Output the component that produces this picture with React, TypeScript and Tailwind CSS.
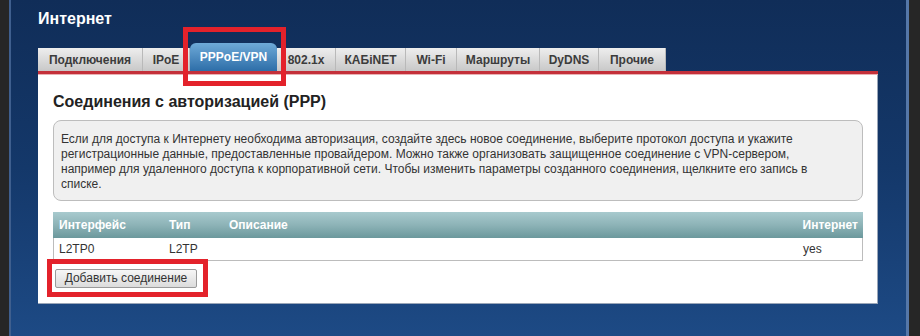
import React from "react";

const tabs = [
  { label: "Подключения", w: "w-[105px]" },
  { label: "IPoE", w: "w-[47px]" },
  { label: "PPPoE/VPN", w: "w-[87px]", active: true },
  { label: "802.1x", w: "w-[59px]" },
  { label: "КАБiNET", w: "w-[70px]" },
  { label: "Wi-Fi", w: "w-[51px]" },
  { label: "Маршруты", w: "w-[83px]" },
  { label: "DyDNS", w: "w-[59px]" },
  { label: "Прочие", w: "w-[67px]" },
];

export default function App() {
  return (
    <div className="relative flex w-[920px] h-[336px] overflow-hidden bg-[#2b2b2b] font-['Liberation_Sans',Arial,sans-serif]">
      {/* left dark strip */}
      <div className="w-[9px] shrink-0 bg-[#262626]" />

      {/* blue panel */}
      <div className="w-[900px] shrink-0 border-l-2 border-r-[3px] border-l-[#3f5f8e] border-r-[#5577a8] bg-gradient-to-b from-[#102d58] via-[#14386a] to-[#1d4a85] px-[27px]">
        <div className="mt-[10px] h-[18px] text-[16px] leading-[18px] font-bold text-white">Интернет</div>

        {/* Tabs */}
        <div className="mt-[15px] flex h-[28px] items-end">
          {tabs.map((t) =>
            t.active ? (
              <div
                key={t.label}
                className={`${t.w} h-[28px] flex items-center justify-center rounded-t-[6px] bg-gradient-to-b from-[#6eaad8] to-[#2d6ea8] text-[12px] font-bold text-white`}
              >
                {t.label}
              </div>
            ) : (
              <div
                key={t.label}
                className={`${t.w} h-[23px] flex items-center justify-center border-r border-[#b9b9b9] bg-gradient-to-b from-[#eeeeee] to-[#c8c8c8] text-[12px] font-bold text-[#3c3c3c]`}
              >
                {t.label}
              </div>
            )
          )}
        </div>
        <div className="h-[4px] w-[840px] bg-[#c4303a] border-b border-[#e9b0b3]" />

        {/* White content box */}
        <div className="w-[840px] h-[229px] bg-white border-r border-b border-[#9aa6b8] px-[15px] pt-[18px]">
          <div className="h-[18px] text-[16px] leading-[18px] font-bold text-[#222]">
            Соединения с авторизацией (PPP)
          </div>

          <div className="mt-[9px] w-[810px] h-[81px] rounded-[8px] border border-[#bdbdbd] bg-[#f0f0f0] pl-[7px] pt-[11px] text-[12px] leading-[15px] text-[#333] whitespace-nowrap">
            Если для доступа к Интернету необходима авторизация, создайте здесь новое соединение, выберите протокол доступа и укажите
            <br />
            регистрационные данные, предоставленные провайдером. Можно также организовать защищенное соединение с VPN-сервером,
            <br />
            например для удаленного доступа к корпоративной сети. Чтобы изменить параметры созданного соединения, щелкните его запись в
            <br />
            списке.
          </div>

          {/* Table */}
          <div className="mt-[11px] w-[810px]">
            <div className="grid h-[26px] grid-cols-[110px_60px_1fr_auto] items-center bg-gradient-to-b from-[#a8cace] via-[#8db3b7] to-[#6b989c] pl-[6px] pr-[5px] text-[12px] font-bold text-white">
              <span>Интерфейс</span>
              <span>Тип</span>
              <span>Описание</span>
              <span>Интернет</span>
            </div>
            <div className="grid h-[23px] grid-cols-[110px_60px_1fr_auto] items-center border-x border-b border-[#bcbcbc] pl-[5px] pr-[4px] text-[12px] text-[#333]">
              <span>L2TP0</span>
              <span>L2TP</span>
              <span />
              <span className="w-[55px]">yes</span>
            </div>
          </div>

          <button className="mt-[8px] ml-[2px] h-[19px] w-[142px] rounded-[2px] border border-[#9a9a9a] bg-gradient-to-b from-[#f6f6f6] to-[#dcdcdc] text-[12px] leading-[17px] text-[#333]">
            Добавить соединение
          </button>
        </div>
      </div>

      {/* right dark strip */}
      <div className="flex-1 bg-[#262626]" />

      {/* red highlight overlays */}
      <div className="pointer-events-none absolute left-[183px] top-[27px] h-[59px] w-[103px] border-[5px] border-[#e3222b]" />
      <div className="pointer-events-none absolute left-[47px] top-[259px] h-[38px] w-[161px] border-[5px] border-[#e3222b]" />
    </div>
  );
}
